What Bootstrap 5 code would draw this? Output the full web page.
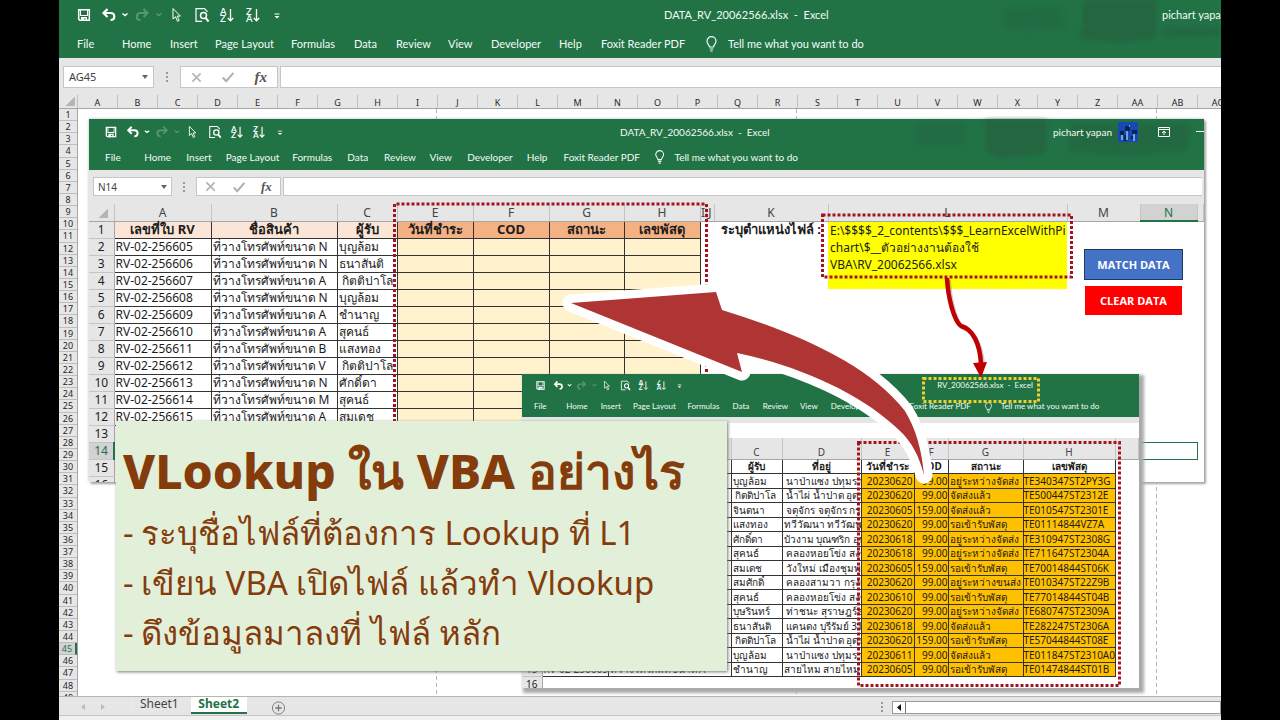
<!DOCTYPE html>
<html lang="th">
<head>
<meta charset="utf-8">
<meta name="viewport" content="width=device-width, initial-scale=1">
<title>VLookup ใน VBA อย่างไร</title>
<link href="https://cdn.jsdelivr.net/npm/bootstrap@5.3.0/dist/css/bootstrap.min.css" rel="stylesheet">
<style>
  :root { --xl: #217346; --chrome: #e6e6e6; --line: #b5b5b5; --ink: #262626; }
  body { background: #000; font-family: "Noto Sans", "Open Sans", sans-serif; color: var(--ink); font-size: 11px; line-height: 1.2; }
  .stage { margin: 0 59px; height: 100vh; background: #fff; }
  .canvas-item { position: absolute; }
  button, input { font: inherit; }
  svg { display: block; }

  /* ribbon, shared by the three workbooks */
  .ribbon { background: var(--xl); color: #f3fbf5; font-family: Lato, "Noto Sans", sans-serif; white-space: nowrap; }
  .ribbon .patches { position: absolute; inset: 0; width: 100%; height: 100%; filter: blur(2px); }
  .qat { display: grid; grid-template-columns: 25fr 25fr 7fr 27fr 7fr 28fr 24fr 26fr 25fr 24fr; width: var(--qat); margin-left: var(--qat-x); flex: none; }
  .qat button { background: none; border: 0; padding: 0; color: #fff; display: flex; align-items: center; justify-content: center; min-width: 0; }
  .qat svg { width: var(--ico); height: var(--ico); flex: none; }
  .qat .dim { opacity: .25; }
  .title-row { height: var(--title-h); }
  .book-title { margin-left: var(--title-gap); width: var(--title-w); text-align: center; white-space: pre; flex: none; }
  .tabs { display: grid; grid-template-columns: 45fr 48fr 45fr 76fr 63fr 42fr 52fr 43fr 68fr 42fr 104fr 23fr 140fr; width: var(--tabs); margin-left: var(--tabs-x); height: var(--tabs-h); align-items: center; }
  .tabs a { color: inherit; text-decoration: none; min-width: 0; }
  .tabs svg { width: var(--ico); height: var(--ico); }

  .main-book { --qat: 218px; --qat-x: 12px; --ico: 16px; --title-h: 30px; --title-gap: 375px; --title-w: 158px; --tabs: 791px; --tabs-x: 18px; --tabs-h: 28px; }
  .data-book { --qat: 191px; --qat-x: 11px; --ico: 14px; --title-h: 25px; --title-gap: 329px; --title-w: 138px; --tabs: 692px; --tabs-x: 16px; --tabs-h: 26px; font-size: 10px; left: 30px; top: 119px; width: 1115px; height: 363px; background: #fff; box-shadow: 2px 2px 2px #a9a9a9, 0 0 3px #bbb; }
  .rv-book { --qat: 157px; --qat-x: 9px; --ico: 11px; --title-h: 23px; --title-gap: 248px; --title-w: 98px; --tabs: 567px; --tabs-x: 12px; --tabs-h: 20px; font-size: 8px; left: 463px; top: 374px; width: 617px; height: 314px; background: #fff; box-shadow: 3px 3px 3px 2px #a9a9a9; }

  /* formula bar */
  .fbar { background: var(--chrome); gap: 0; }
  .fbox { background: #fff; border: 1px solid #c6c6c6; color: #444; }
  .fbox button { border: 0; background: none; padding: 0; color: #b0b0b0; }
  .fbar input { border: 0; background: none; padding: 0; min-width: 0; width: 100%; outline: 0; color: #444; }
  .fbar .fx { font-family: "Liberation Serif", serif; font-style: italic; font-weight: bold; color: #555; }
  .main-book .fbar { height: 37px; padding: 8px 0 7px 4px; }
  .main-book .name-box { width: 91px; padding: 0 5px; }
  .main-book .fx-box { width: 98px; }
  .main-book .grip { width: 26px; }
  .main-book .fx { font-size: 15px; }
  .data-book .fbar { height: 34px; padding: 7px 2px 8px 4px; }
  .data-book .name-box { width: 79px; padding: 0 4px; }
  .data-book .fx-box { width: 85px; }
  .data-book .grip { width: 24px; }
  .data-book .fx { font-size: 13px; }
  .rv-book .fbar { height: 21px; padding: 6px 0 0; }
  .grip svg { margin: auto; }
  .formula { margin-left: 2px; }

  /* outer sheet */
  .col-heads { height: 14px; background: var(--chrome); border-bottom: 1px solid #a6a6a6; font-size: 9px; }
  .col-heads span { width: 40px; flex: none; text-align: center; border-right: 1px solid #c0c0c0; line-height: 15px; }
  .col-heads .corner { width: 19px; background: linear-gradient(135deg, transparent 62%, #b5b5b5 62%) no-repeat 2px 1px / 14px 10px; }
  .row-heads { width: 19px; background: var(--chrome); border-right: 1px solid #a6a6a6; font-size: 9px; }
  .row-heads span { flex: 1 1 0; min-height: 0; border-bottom: 1px solid #bdbdbd; text-align: center; line-height: 12px; }
  .row-heads span.cut { flex: 0 0 4px; overflow: hidden; border: 0; }
  .row-heads .on { background: #d2d2d2; color: var(--xl); border-right: 2px solid var(--xl); }
  .pages { background: repeating-linear-gradient(#b5b5b5 0 4px, transparent 4px 7px) 358px 0 / 1px 100% no-repeat, repeating-linear-gradient(#b5b5b5 0 4px, transparent 4px 7px) 718px 0 / 1px 100% no-repeat, repeating-linear-gradient(#b5b5b5 0 4px, transparent 4px 7px) 1078px 0 / 1px 100% no-repeat; }

  /* worksheet tables */
  .grid-t { table-layout: fixed; border-collapse: collapse; width: 100%; white-space: nowrap; margin: 0; color: #1c1c1c; }
  .grid-t th, .grid-t td { padding: 0 1px; font-weight: 400; overflow: visible; }
  .grid-t thead th { background: var(--chrome); border-right: 1px solid #c4c4c4; border-bottom: 1px solid #a6a6a6; text-align: center; padding: 0; color: #444; }
  .grid-t tbody th { background: var(--chrome); border-right: 1px solid #a6a6a6; border-bottom: 1px solid #c4c4c4; text-align: center; padding: 0; }
  .grid-t .bx { border: 1px solid #333; }
  .grid-t .hd { font-weight: 700; text-align: center; padding: 0; }
  .tri { background: linear-gradient(135deg, transparent 62%, #b5b5b5 62%) no-repeat 50% 50% / 14px 12px var(--chrome) !important; }
  .data-book .grid-t { font-size: 12px; line-height: 15px; }
  .data-book .grid-t .hd { font-size: 13px; }
  .data-book .grid-t tr { height: 17px; }
  .peach { background: #fbe5d6; }
  .salmon { background: #f4b183; }
  .cream { background: #fff2cc; }
  .data-book .path-cell { background: #ff0; vertical-align: top; line-height: 17px; padding: 0 2px; }
  .grid-t thead .on { background: #d2d2d2; color: var(--xl); border-bottom: 2px solid var(--xl); }
  .grid-t tbody th.on { background: #d2d2d2; color: var(--xl); border-right: 2px solid var(--xl); }
  .grid-t .sel { border: 1px solid var(--xl); }
  .rv-book .grid-t { font-size: 10px; line-height: 12px; }
  .rv-book .grid-t thead tr { height: 21px; }
  .rv-book .grid-t tbody tr:nth-child(odd) { height: 14px; }
  .rv-book .grid-t tbody tr:nth-child(even) { height: 15px; }
  .rv-book thead th { vertical-align: bottom; padding-bottom: 1px; }
  .gold { background: #ffc000; }
  .clip-cell { overflow: hidden !important; }

  .macro { width: 99px; height: 31px; border: 1px solid #1f3864; border-radius: 0; color: #fff; font: 700 11px "Open Sans", sans-serif; padding: 0; }
  .match { background: #4472c4; }
  .clear { background: #f00; border-color: #f00; width: 97px; height: 29px; }

  /* caption panel */
  .caption-panel { left: 57px; top: 421px; width: 611px; height: 250px; background: #e2efd9; color: #843c0c; box-shadow: 1px 1px 3px #777; font-family: "Noto Sans", sans-serif; padding: 22px 7px; white-space: nowrap; }
  .caption-panel h1 { font-size: 48px; font-weight: 800; line-height: 56px; margin: 0 0 9px; }
  .caption-panel ul { list-style: none; padding: 0; margin: 0; font-size: 33px; line-height: 50px; }
  .caption-panel li { display: grid; grid-template-columns: 18px 1fr; }

  .sheet-tabs { height: 20px; background: var(--chrome); border-top: 1px solid #b5b5b5; border-bottom: 1px solid #c4c4c4; font-size: 12px; }
  .sheet-tabs a { color: #444; text-decoration: none; line-height: 14px; }
  .sheet-tabs .current { background: #fff; color: var(--xl); font-weight: 700; border-bottom: 2px solid var(--xl); width: 56px; text-align: center; height: 17px; }
  .sheet-tabs button { background: none; border: 0; padding: 0; color: #777; }
  .hscroll { width: 329px; height: 13px; background: #fff; border: 1px solid #999; }
  .status { height: 4px; background: #f0f0f0; }
</style>
</head>
<body>

<svg width="0" height="0" class="position-absolute" aria-hidden="true">
  <symbol id="i-save" viewBox="0 0 16 16"><path fill="none" stroke="currentColor" stroke-width="1.5" d="M2.7 2.7h10.6v10.6H3.8L2.7 12.2z"/><path fill="currentColor" d="M4 8h8v1H4zM5 10h6v4H9.500v-2.500H8V14H5zM4 3h1v5H4zM11 3h1v5h-1z"/></symbol>
  <symbol id="i-undo" viewBox="0 0 16 16"><path fill="none" stroke="currentColor" stroke-width="2.200" d="M3 6h6.500c5 0 5 7 0 7M6.500 2 2.500 6l4 4"/></symbol>
  <symbol id="i-redo" viewBox="0 0 16 16"><path fill="none" stroke="currentColor" stroke-width="2" d="M13 6H6.500c-5 0-5 7 0 7M9.500 2l4 4-4 4"/></symbol>
  <symbol id="i-caret" viewBox="0 0 16 16"><path fill="none" stroke="currentColor" stroke-width="1.500" d="m5.500 6.500 2.500 2 2.500-2"/></symbol>
  <symbol id="i-cursor" viewBox="0 0 16 16"><path fill="none" stroke="currentColor" d="M5 1.500v10.500l2.500-2.300 2 4.600 1.700-.8-2-4.400h3.200z"/></symbol>
  <symbol id="i-preview" viewBox="0 0 16 16"><path fill="none" stroke="currentColor" stroke-width="1.200" d="M8 14.300H2V1.700h8.500l2.500 2.500V5"/><circle cx="9.500" cy="8.500" r="3" fill="none" stroke="currentColor" stroke-width="1.500"/><path stroke="currentColor" stroke-width="2" d="m11.600 11 3 3.500"/></symbol>
  <symbol id="i-az" viewBox="0 0 16 16"><text x="1" y="7.500" font-size="9.500" font-weight="600" fill="currentColor">A</text><text x="1" y="15" font-size="9.500" font-weight="600" fill="currentColor">Z</text><path fill="none" stroke="currentColor" stroke-width="1.300" d="M11.500 2v11.500M8.800 11l2.700 2.800 2.700-2.800"/></symbol>
  <symbol id="i-za" viewBox="0 0 16 16"><text x="1" y="7.500" font-size="9.500" font-weight="600" fill="currentColor">Z</text><text x="1" y="15" font-size="9.500" font-weight="600" fill="currentColor">A</text><path fill="none" stroke="currentColor" stroke-width="1.300" d="M11.500 2v11.500M8.800 11l2.700 2.800 2.700-2.800"/></symbol>
  <symbol id="i-more" viewBox="0 0 16 16"><path fill="currentColor" d="M5.500 6.500h5v1h-5zM5.500 9h5L8 11.500z"/></symbol>
  <symbol id="i-bulb" viewBox="0 0 16 16"><path fill="none" stroke="currentColor" stroke-width="1.200" d="M4.500 11C4.500 9 2 8 2 5.200a4.300 4.300 0 0 1 9 0C11 8 8.500 9 8.500 11zM4.700 13h3.600M5.300 15h2.400"/></symbol>
  <symbol id="i-grip" viewBox="0 0 4 12"><path fill="#999" d="M1 1h2v2H1zM1 5h2v2H1zM1 9h2v2H1z"/></symbol>
  <symbol id="i-x" viewBox="0 0 12 12"><path stroke="currentColor" stroke-width="1.600" d="m1.500 1.500 9 9m0-9-9 9"/></symbol>
  <symbol id="i-ok" viewBox="0 0 12 12"><path fill="none" stroke="currentColor" stroke-width="2" d="m.8 6.500 3.400 3.700L11.300 2"/></symbol>
</svg>

<main class="stage position-relative overflow-hidden d-flex flex-column main-book">
  <header class="ribbon position-relative flex-shrink-0" data-title="DATA_RV_20062566.xlsx  -  Excel">
    <svg class="patches" viewBox="0 0 1162 58" preserveAspectRatio="xMaxYMin slice" fill="#24643f" opacity=".85"><path opacity=".4" d="M944 8l60-4 4 26-56 2-10-6z"/><path d="M1024 0h74l-1 38-30 4-42-2-6-6 5-6z"/><path opacity=".7" d="M1105 26h57v10l-58 2z"/></svg>
  </header>

  <div class="fbar d-flex flex-shrink-0" data-cell="AG45"></div>

  <div class="col-heads d-flex flex-shrink-0 overflow-hidden" id="colHeads"><span class="corner"></span></div>
  <div class="d-flex flex-fill" style="min-height:0">
    <div class="row-heads d-flex flex-column" id="rowHeads"></div>
    <div class="pages flex-fill"></div>
  </div>

  <footer class="flex-shrink-0">
    <nav class="sheet-tabs d-flex align-items-start" aria-label="Sheets">
      <button type="button" class="ms-3 mt-1 ps-1" aria-label="Previous sheet"><svg width="8" height="12" viewBox="0 0 8 12"><path fill="#bbb" d="M6 3v6L2 6z"/></svg></button>
      <button type="button" class="ms-2 mt-1 ps-1" aria-label="Next sheet"><svg width="8" height="12" viewBox="0 0 8 12"><path fill="#bbb" d="M2 3v6l4-3z"/></svg></button>
      <a href="#" class="border-start border-secondary-subtle ms-4 ps-2 pe-2">Sheet1</a>
      <a href="#" class="current ms-1">Sheet2</a>
      <button type="button" class="ms-4 mt-1" aria-label="New sheet"><svg width="15" height="14" viewBox="0 0 15 15"><circle cx="7.500" cy="7.500" r="6.500" fill="none" stroke="#777"/><path stroke="#777" stroke-width="1.400" d="M4 7.500h7M7.500 4v7"/></svg></button>
      <svg class="ms-auto me-2 mt-1" width="4" height="12"><use href="#i-grip"/></svg>
      <div class="hscroll mt-1 d-flex"><button type="button" aria-label="Scroll left" class="border-end border-secondary"><svg width="12" height="11" viewBox="0 0 12 11"><path fill="#111" d="M8 2v7L4 5.500z"/></svg></button></div>
    </nav>
    <div class="status"></div>
  </footer>

  <!-- destination workbook -->
  <section class="canvas-item data-book d-flex flex-column" aria-label="DATA_RV_20062566.xlsx">
    <header class="ribbon position-relative flex-shrink-0" data-title="DATA_RV_20062566.xlsx  -  Excel">
      <svg class="patches" viewBox="0 0 1115 51" preserveAspectRatio="xMaxYMin slice" fill="#24643f" opacity=".85"><path opacity=".5" d="M826 6l50-3 2 22-50 2z"/><path d="M896 1h62l-2 34-46 4-12-5z"/><path opacity=".7" d="M982 4h120l-2 28-60 5-62-4z"/></svg>
    </header>
    <div class="fbar d-flex flex-shrink-0" data-cell="N14"></div>
    <div class="flex-fill overflow-hidden" style="min-height:0">
      <table class="grid-t" id="dataTable">
        <colgroup><col style="width:25px"><col style="width:97px"><col style="width:126px"><col style="width:60px"><col style="width:76px"><col style="width:76px"><col style="width:75px"><col style="width:76px"><col style="width:6px"><col style="width:8px"><col style="width:114px"><col style="width:239px"><col style="width:73px"><col style="width:57px"><col></colgroup>
        <thead><tr><th class="tri"></th><th>A</th><th>B</th><th>C</th><th>E</th><th>F</th><th>G</th><th>H</th><th>I</th><th>J</th><th>K</th><th>L</th><th>M</th><th class="on">N</th><th></th></tr></thead>
        <tbody></tbody>
      </table>
    </div>
    <svg class="canvas-item top-0 start-0 pe-none" width="1115" height="363" fill="none" stroke="#a5141e" stroke-width="3" stroke-dasharray="3 2"><path d="M305.500 363V85H617.500V363"/><path d="M733.500 96H982.500V158H733.500Z"/></svg>
    <div class="canvas-item d-flex flex-column align-items-center" style="left:995px;top:130px;gap:6px">
      <button type="button" class="macro match">MATCH DATA</button>
      <button type="button" class="macro clear">CLEAR DATA</button>
    </div>
  </section>

  <!-- source workbook -->
  <section class="canvas-item rv-book d-flex flex-column" aria-label="RV_20062566.xlsx">
    <header class="ribbon position-relative flex-shrink-0" data-title="RV_20062566.xlsx  -  Excel"></header>
    <div class="fbar d-flex flex-shrink-0"><input class="bg-white h-100" aria-label="Formula bar"></div>
    <div class="flex-fill overflow-hidden" style="min-height:0">
      <table class="grid-t" id="rvTable">
        <colgroup><col style="width:20px"><col style="width:66px"><col style="width:123px"><col style="width:51px"><col style="width:79px"><col style="width:53px"><col style="width:34px"><col style="width:75px"><col style="width:92px"><col></colgroup>
        <thead><tr><th></th><th>A</th><th>B</th><th>C</th><th>D</th><th>E</th><th>F</th><th>G</th><th>H</th><th></th></tr></thead>
        <tbody></tbody>
      </table>
    </div>
    <svg class="canvas-item top-0 start-0 pe-none" width="617" height="314" fill="none" stroke="#a5141e" stroke-width="3" stroke-dasharray="3 2"><path d="M336.500 68.500H597.500V311.500H336.500Z"/></svg>
  </section>

  <!-- arrows linking the workbooks -->
  <svg class="canvas-item top-0 start-0 pe-none" width="1162" height="720" viewBox="59 0 1162 720">
    <path fill="#af3535" stroke="#fff" stroke-width="17" stroke-linejoin="round" paint-order="stroke" d="M571 303 716 292l6 18c72 22 146 53 183 101 11 18 17 40 19 64-5-19-12-33-25-45C862 394 800 366 737 353l5 19z"/>
    <path fill="none" stroke="#555" stroke-opacity=".3" stroke-width="4" d="M949 280c1 20 7 43 14 48 12 3 19 18 20 38"/>
    <path fill="none" stroke="#c00000" stroke-width="4.500" d="M947 278c1 20 7 43 14 48 12 3 19 18 20 38"/>
    <path fill="#c00000" d="m973 363 14-1-6 16z"/>
    <path fill="none" stroke="#f2d02c" stroke-width="3" stroke-dasharray="3 2" d="M923.500 378.500h115v23h-115z"/>
  </svg>

  <section class="canvas-item caption-panel">
    <h1>VLookup ใน VBA อย่างไร</h1>
    <ul>
      <li><span>-</span><span>ระบุชื่อไฟล์ที่ต้องการ Lookup ที่ L1</span></li>
      <li><span>-</span><span>เขียน VBA เปิดไฟล์ แล้วทำ Vlookup</span></li>
      <li><span>-</span><span>ดึงข้อมูลมาลงที่ ไฟล์ หลัก</span></li>
    </ul>
  </section>
</main>

<script src="https://cdn.jsdelivr.net/npm/bootstrap@5.3.0/dist/js/bootstrap.bundle.min.js"></script>
<script>
  const icon = id => `<svg aria-hidden="true"><use href="#i-${id}"/></svg>`;
  const tools = [['save','Save'],['undo','Undo'],['caret','Undo list'],['redo','Redo',1],['caret','Redo list',1],['cursor','Select'],['preview','Print preview'],['az','Sort ascending'],['za','Sort descending'],['more','Customize']];
  const tabs = ['File','Home','Insert','Page Layout','Formulas','Data','Review','View','Developer','Help','Foxit Reader PDF'];

  document.querySelectorAll('.ribbon').forEach((r, i) => {
    const user = [
      '<span style="margin-left:340px">pichart yapan</span>',
      `<span class="text-end" style="margin-left:294px;width:60px">pichart yapan</span>
       <svg style="margin-left:6px" width="20" height="20" viewBox="0 0 20 20"><path fill="#1648b8" d="M0 0h20v20H0z"/><path fill="#0b2450" d="M7 4h5v5H7zM2 9h4v4H2zM14 8h5v4h-5zM6 13h3v6H6zM13 14h4v3h-4z"/><path fill="#72a4dc" d="M8 9h2v9H8zM3 13h2v5H3zM15 12h2v7h-2zM11 3h1v2h-1z"/></svg>
       <svg width="12" height="10" viewBox="0 0 12 10" style="margin-left:20px"><path fill="none" stroke="#fff" d="M.5.500h11v9H.5zM.5 2.500h11M6 8V4M4 6l2-2 2 2"/></svg>
       <svg width="8" height="10" viewBox="0 0 8 10" style="margin-left:26px"><path stroke="#fff" d="M0 4.500h8"/></svg>`,
      ''][i];
    r.insertAdjacentHTML('beforeend',
      `<div class="title-row d-flex align-items-center overflow-hidden position-relative">
        <div class="qat">${tools.map(t => `<button type="button" aria-label="${t[1]}" class="${t[2] ? 'dim' : ''}">${icon(t[0])}</button>`).join('')}</div>
        <div class="book-title">${r.dataset.title}</div>${user}</div>
       <nav class="tabs position-relative">${tabs.map(t => `<a href="#">${t}</a>`).join('')}${icon('bulb')}<a href="#">Tell me what you want to do</a></nav>`);
  });

  document.querySelectorAll('.fbar[data-cell]').forEach(b => {
    b.innerHTML = `<div class="fbox name-box d-flex align-items-center"><input aria-label="Name box" value="${b.dataset.cell}"><svg width="6" height="4" viewBox="0 0 6 4" class="flex-shrink-0"><path fill="#666" d="M0 0h6L3 4z"/></svg></div>
      <div class="grip d-flex align-items-center"><svg width="4" height="12"><use href="#i-grip"/></svg></div>
      <div class="fbox fx-box d-flex align-items-center justify-content-around"><button type="button" aria-label="Cancel"><svg width="11" height="11"><use href="#i-x"/></svg></button><button type="button" aria-label="Enter"><svg width="12" height="12"><use href="#i-ok"/></svg></button><button type="button" class="fx">fx</button></div>
      <div class="fbox formula flex-fill border-end-0 d-flex"><input aria-label="Formula bar"></div>`;
  });

  const letters = [...'ABCDEFGHIJKLMNOPQRSTUVWXYZ', 'AA', 'AB', 'AC'];
  colHeads.insertAdjacentHTML('beforeend', letters.map(l => `<span>${l}</span>`).join(''));
  rowHeads.innerHTML = Array.from({length: 49}, (_, i) => `<span class="${i === 44 ? 'on' : i === 48 ? 'cut' : ''}">${i + 1}</span>`).join('');

  const orders = [['N','บุญล้อม'],['N','ธนาสันติ'],['A','&nbsp;กิตติปาโล'],['N','บุญล้อม'],['A','ชำนาญ'],['A','สุคนธ์'],['B','แสงทอง'],['V','&nbsp;กิตติปาโล'],['N','ศักดิ์ดา'],['M','สุคนธ์'],['A','สมเดช']];
  let html = `<tr><th>1</th><td class="bx hd peach">เลขที่ใบ RV</td><td class="bx hd peach">ชื่อสินค้า</td><td class="bx hd peach">ผู้รับ</td>
    ${['วันที่ชำระ','COD','สถานะ','เลขพัสดุ'].map(t => `<td class="bx hd salmon">${t}</td>`).join('')}
    <td></td><td></td><td class="hd">ระบุตำแหน่งไฟล์ :</td><td class="path-cell" rowspan="4">E:\\$$$$_2_contents\\$$$_LearnExcelWithPi<br>chart\\$__ตัวอย่างงานต้องใช้<br>VBA\\RV_20062566.xlsx</td><td></td><td></td><td></td></tr>`;
  orders.forEach((o, i) => {
    html += `<tr><th>${i + 2}</th><td class="bx">RV-02-2566${String(i + 5).padStart(2, '0')}</td><td class="bx">ที่วางโทรศัพท์ขนาด ${o[0]}</td><td class="bx">${o[1]}</td>${'<td class="bx cream"></td>'.repeat(4)}${'<td></td>'.repeat(i < 3 ? 6 : 7)}</tr>`;
  });
  [13, 14, 15, 16].forEach(n => {
    html += `<tr><th class="${n === 14 ? 'on' : ''}">${n}</th>${'<td></td>'.repeat(12)}<td class="${n === 14 ? 'sel' : ''}"></td><td></td></tr>`;
  });
  dataTable.tBodies[0].innerHTML = html;

  const parcels = [
    ['บุญล้อม','&nbsp;นาป่าแซง ปทุมราช','20230620','99.00','อยู่ระหว่างจัดส่ง','TE340347ST2PY3G'],
    ['&nbsp;กิตติปาโล','&nbsp;น้ำไผ่ น้ำปาด อุตรดิตถ์','20230620','99.00','จัดส่งแล้ว','TE500447ST2312E'],
    ['จินตนา','&nbsp;จตุจักร จตุจักร กรุง','20230605','159.00','จัดส่งแล้ว','TE010547ST2301E'],
    ['แสงทอง','ทวีวัฒนา ทวีวัฒนา','20230620','99.00','รอเข้ารับพัสดุ','TE01114844VZ7A'],
    ['ศักดิ์ดา','บัวงาม บุณฑริก อุบล','20230618','99.00','อยู่ระหว่างจัดส่ง','TE310947ST2308G'],
    ['สุคนธ์','&nbsp;คลองหอยโข่ง สงขลา','20230618','99.00','อยู่ระหว่างจัดส่ง','TE711647ST2304A'],
    ['สมเดช','&nbsp;วังใหม่ เมืองชุมพร','20230605','159.00','รอเข้ารับพัสดุ','TE70014844ST06K'],
    ['สมศักดิ์','&nbsp;คลองสามวา กรุงเทพ','20230620','99.00','อยู่ระหว่างขนส่ง','TE010347ST22Z9B'],
    ['สุคนธ์','&nbsp;คลองหอยโข่ง สงขลา','20230610','99.00','รอเข้ารับพัสดุ','TE77014844ST04B'],
    ['บุษรินทร์','&nbsp;ท่าชนะ สุราษฎร์ธานี','20230620','99.00','อยู่ระหว่างจัดส่ง','TE680747ST2309A'],
    ['ธนาสันติ','&nbsp;แคนดง บุรีรัมย์ 31150','20230618','99.00','จัดส่งแล้ว','TE282247ST2306A'],
    ['&nbsp;กิตติปาโล','&nbsp;น้ำไผ่ น้ำปาด อุตรดิตถ์','20230620','159.00','รอเข้ารับพัสดุ','TE57044844ST08E'],
    ['บุญล้อม','&nbsp;นาป่าแซง ปทุมราช','20230611','99.00','จัดส่งแล้ว','TE011847ST2310A0'],
    ['ชำนาญ','สายไหม สายไหม','20230605','99.00','รอเข้ารับพัสดุ','TE01474844ST01B']];
  rvTable.tBodies[0].innerHTML =
    `<tr><th>1</th>${['เลขที่ใบ RV','ชื่อสินค้า','ผู้รับ','ที่อยู่','วันที่ชำระ','COD','สถานะ','เลขพัสดุ'].map(t => `<td class="bx hd">${t}</td>`).join('')}<td></td></tr>` +
    parcels.map((p, i) => `<tr><th>${i + 2}</th><td class="bx">RV-02-2566${String(i > 12 ? 5 : i + 5).padStart(2, '0')}</td><td class="bx">ที่วางโทรศัพท์ขนาด A</td><td class="bx">${p[0]}</td><td class="bx clip-cell">${p[1]}</td><td class="bx gold text-end">${p[2]}</td><td class="bx gold text-end px-0">${p[3]}</td><td class="bx gold">${p[4]}</td><td class="bx gold px-0">${p[5]}</td><td></td></tr>`).join('') +
    `<tr><th>16</th>${'<td></td>'.repeat(9)}</tr>`;
</script>
</body>
</html>
